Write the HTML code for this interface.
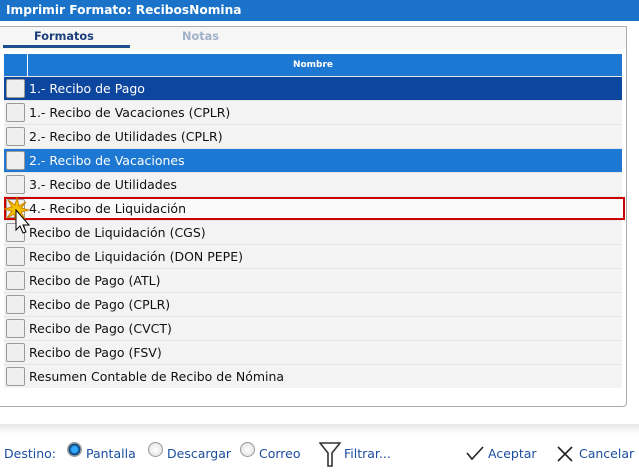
<!DOCTYPE html>
<html><head><meta charset="utf-8"><style>
body{margin:0;width:639px;height:472px;background:#fff;font-family:"DejaVu Sans",Verdana,sans-serif;position:relative;overflow:hidden}
.title{position:absolute;left:0;top:0;width:639px;height:21px;background:#1a73c8;color:#fff;font-weight:bold;font-size:12.2px;line-height:21px;padding-left:6px;box-sizing:border-box}
.panel{position:absolute;left:0;top:26px;width:627px;height:381px;border:1px solid #aaa;border-left:none;border-radius:0 0 4px 0;background:#fff;box-sizing:border-box}
.tabbar{position:absolute;left:0;top:27px;width:626px;height:22px;background:#f6f6f6}
.tab{position:absolute;top:30px;font-size:11.3px;font-weight:bold}
.grid{position:absolute;left:4px;top:54px;width:618px}
.hdr{height:22px;background:#1c78d2;color:#fff;font-size:9px;font-weight:bold;line-height:22px;text-align:center;position:relative}
.hdr .c{position:absolute;left:0;top:0;width:23px;height:22px;border-right:1px solid #fff}
.row{height:24px;position:relative;font-size:12.5px;line-height:24px;color:#111;background:#f3f3f3;border-top:1px solid #e6e6e6;box-sizing:border-box}
.row .cb{position:absolute;left:2px;top:2px;width:19px;height:19px;border:1px solid #9a9a9a;border-radius:2px;background:#efefef;box-sizing:border-box}
.row span{position:absolute;left:25px}
.sel1{background:#0d469e;color:#fff}
.sel2{background:#1c78d2;color:#fff}
.foot{position:absolute;left:0;top:424px;width:639px;height:48px;background:linear-gradient(#e8e8e8,#fff 10px)}
.f{position:absolute;top:446px;font-size:12.5px;color:#1b4ea0}
.radio{position:absolute;top:442px;width:15px;height:15px;border-radius:50%;border:1px solid #999;background:radial-gradient(#fff,#ddd);box-sizing:border-box}
</style></head><body>
<div class="title">Imprimir Formato: RecibosNomina</div>
<div class="panel"></div>
<div class="tabbar"></div>
<div class="tab" style="left:34px;color:#1b3f7a">Formatos</div>
<div style="position:absolute;left:3px;top:45px;width:127px;height:3px;background:#1b4f8f"></div>
<div class="tab" style="left:182px;color:#a0b0c8">Notas</div>
<div class="grid">
<div class="hdr"><div class="c"></div>Nombre</div>
<div class="row sel1"><div class="cb"></div><span>1.- Recibo de Pago</span></div>
<div class="row"><div class="cb"></div><span>1.- Recibo de Vacaciones (CPLR)</span></div>
<div class="row"><div class="cb"></div><span>2.- Recibo de Utilidades (CPLR)</span></div>
<div class="row sel2"><div class="cb"></div><span>2.- Recibo de Vacaciones</span></div>
<div class="row"><div class="cb"></div><span>3.- Recibo de Utilidades</span></div>
<div class="row" style="background:#fafafa"><div class="cb"></div><span>4.- Recibo de Liquidación</span></div>
<div class="row"><div class="cb"></div><span>Recibo de Liquidación (CGS)</span></div>
<div class="row"><div class="cb"></div><span>Recibo de Liquidación (DON PEPE)</span></div>
<div class="row"><div class="cb"></div><span>Recibo de Pago (ATL)</span></div>
<div class="row"><div class="cb"></div><span>Recibo de Pago (CPLR)</span></div>
<div class="row"><div class="cb"></div><span>Recibo de Pago (CVCT)</span></div>
<div class="row"><div class="cb"></div><span>Recibo de Pago (FSV)</span></div>
<div class="row"><div class="cb"></div><span>Resumen Contable de Recibo de Nómina</span></div>
</div>
<div style="position:absolute;left:4px;top:197px;width:621px;height:23px;border:2px solid #c00;box-sizing:border-box"></div>
<svg style="position:absolute;left:4px;top:196px" width="32" height="40"><polygon points="13,2 15,10 22,6 17,12 25,14 17,16 21,23 14,18 12,26 10,18 3,22 8,15 0,13 8,11 4,4 11,9" fill="#f2c200" stroke="#d08000"/><path d="M12,14 L12,34 L16,30 L19,37 L22,36 L19,29 L25,29 Z" fill="#fff" stroke="#000"/></svg>
<div class="foot"></div>
<div class="f" style="left:4px">Destino:</div>
<div class="radio" style="left:67px;background:radial-gradient(#3af 30%,#036 60%,#ccc 70%)"></div>
<div class="f" style="left:86px">Pantalla</div>
<div class="radio" style="left:148px"></div>
<div class="f" style="left:167px">Descargar</div>
<div class="radio" style="left:240px"></div>
<div class="f" style="left:259px">Correo</div>
<svg style="position:absolute;left:319px;top:441px" width="22" height="26"><path d="M1,2 H21 L13,12 V25 H9 V12 Z" fill="none" stroke="#333" stroke-width="1.6"/></svg>
<div class="f" style="left:344px">Filtrar...</div>
<svg style="position:absolute;left:465px;top:445px" width="20" height="16"><path d="M2,8 L7,14 L18,2" fill="none" stroke="#222" stroke-width="1.6"/></svg>
<div class="f" style="left:488px">Aceptar</div>
<svg style="position:absolute;left:556px;top:445px" width="18" height="18"><path d="M2,2 L16,16 M16,2 L2,16" stroke="#222" stroke-width="1.6"/></svg>
<div class="f" style="left:579px">Cancelar</div>
</body></html>
